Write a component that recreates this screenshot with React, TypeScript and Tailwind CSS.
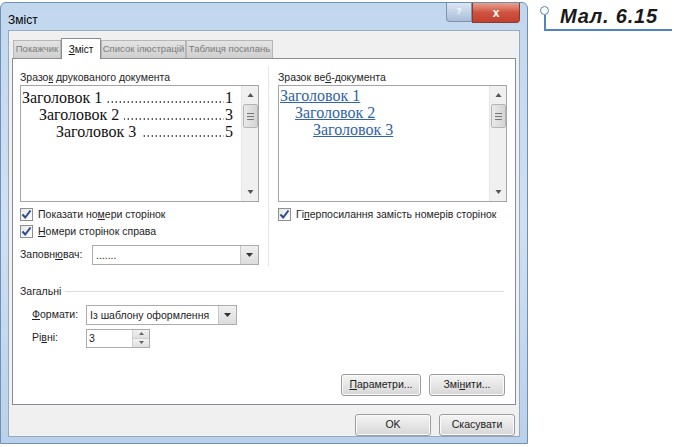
import { ReactNode } from 'react';

const ui = "font-['Liberation_Sans',Arial,sans-serif]";

function Checkbox({ checked = true }: { checked?: boolean }) {
  return (
    <span className="w-[13px] h-[13px] border border-[#8e8f8f] bg-gradient-to-br from-[#e6e6e6] to-white flex items-center justify-center shrink-0">
      {checked && (
        <svg width="11" height="11" viewBox="0 0 11 11">
          <path d="M1.5 5.5 L4.2 8.5 L9.5 1.5" fill="none" stroke="#2a4b8d" strokeWidth="2" />
        </svg>
      )}
    </span>
  );
}

function ScrollBar() {
  return (
    <div className="w-[17px] shrink-0 bg-[#f0f0f0] border-l border-[#e6e6e6] flex flex-col items-center">
      <svg width="7" height="16" viewBox="0 0 7 16" className="mt-[1px]">
        <path d="M0.5 10 L3.5 6 L6.5 10 Z" fill="#555" />
      </svg>
      <div className="w-[15px] h-[24px] mt-[1px] bg-gradient-to-r from-[#e9e9e9] to-[#d4d4d4] border border-[#b5b5b5] rounded-[2px] flex flex-col items-center justify-center gap-[2px]">
        <span className="w-[7px] h-px bg-[#777]" />
        <span className="w-[7px] h-px bg-[#777]" />
        <span className="w-[7px] h-px bg-[#777]" />
      </div>
      <div className="flex-1" />
      <svg width="7" height="16" viewBox="0 0 7 16" className="mb-[1px]">
        <path d="M0.5 6 L3.5 10 L6.5 6 Z" fill="#555" />
      </svg>
    </div>
  );
}

// one entry of the printed-style TOC; the dot leader is a repeating background
function TocLine({ title, page, indent }: { title: string; page: string; indent: number }) {
  return (
    <div className="flex items-baseline leading-[17px] whitespace-nowrap min-w-0" style={{ paddingLeft: indent }}>
      <span className="shrink-0">{title}</span>
      <span className="flex-1 min-w-0 h-[2px] ml-[5px] mr-[1px] bg-[linear-gradient(to_right,#222_1.5px,transparent_1.5px)] bg-[length:4px_100%] bg-repeat-x bg-right" />
      <span className="shrink-0">{page}</span>
    </div>
  );
}

function Combo({ value, width }: { value: string; width: number }) {
  return (
    <div className="h-[20px] border border-[#acacac] bg-white flex" style={{ width }}>
      <span className="flex-1 pl-[3px] leading-[18px] text-[#222] whitespace-nowrap overflow-hidden">{value}</span>
      <span className="w-[18px] bg-gradient-to-b from-[#f0f0f0] to-[#dcdcdc] border-l border-[#c8c8c8] flex items-center justify-center">
        <svg width="7" height="4" viewBox="0 0 7 4"><path d="M0 0 L7 0 L3.5 4 Z" fill="#333" /></svg>
      </span>
    </div>
  );
}

function Btn({ children, width }: { children: ReactNode; width: number }) {
  return (
    <div
      className="h-[22px] border border-[#9c9c9c] rounded-[3px] bg-gradient-to-b from-[#f4f4f4] via-[#e6e6e6] to-[#d6d6d6] flex items-center justify-center text-[#222] shadow-[inset_0_0_0_1px_#fbfbfb]"
      style={{ width }}
    >
      {children}
    </div>
  );
}

function Tab({ label, active = false, width }: { label: ReactNode; active?: boolean; width: number }) {
  return (
    <div
      className={
        active
          ? 'h-[21px] -mb-px border border-b-0 border-[#898c95] bg-white flex items-center justify-center text-[#111] z-10 whitespace-nowrap text-[10px]'
          : 'h-[18px] border border-b-0 border-[#b6b6b6] bg-gradient-to-b from-[#e4e4e4] to-[#cfcfcf] flex items-center justify-center text-[#7a7a7a] whitespace-nowrap text-[9.5px]'
      }
      style={{ width }}
    >
      {label}
    </div>
  );
}

export default function App() {
  return (
    <div className={`w-[674px] h-[447px] bg-white flex ${ui} text-[10.5px] text-[#1e1e1e]`}>
      {/* dialog window */}
      <div className="mt-[2px] w-[528px] h-[442px] shrink-0 rounded-t-[6px] border border-[#6f8fb4] bg-gradient-to-b from-[#c2d7ee] via-[#cfe0f2] to-[#b9d1ea] flex flex-col px-[7px] pb-[6px]">
        <div className="h-[27px] flex items-start">
          <span className="mt-[8px] text-[12px] text-black">Зміст</span>
          <div className="flex-1" />
          <div className="w-[26px] h-[19px] rounded-bl-[4px] border border-[#7c93ad] border-t-0 bg-gradient-to-b from-[#dce7f3] to-[#a9bfd8] flex items-center justify-center">
            <span className="text-[9px] font-bold text-[#f5f8fb]">?</span>
          </div>
          <div className="w-[48px] h-[20px] rounded-br-[4px] border border-[#8a3a30] border-t-0 bg-gradient-to-b from-[#e7a08e] via-[#cf5240] to-[#c3402e] flex items-center justify-center">
            <span className="text-[12px] font-bold text-white">x</span>
          </div>
        </div>

        {/* client area */}
        <div className="flex-1 bg-[#f0f0f0] border border-[#96a9c0] flex flex-col px-[3px] pt-[6px]">
          <div className="flex items-end pl-[1px] h-[21px]">
            <Tab label="Покажчик" width={48} />
            <Tab label={<span><u>З</u>міст</span>} active width={40} />
            <Tab label="Список ілюстрацій" width={85} />
            <Tab label="Таблиця посилань" width={87} />
          </div>

          {/* tab page */}
          <div className="h-[347px] bg-white border border-[#898c95] flex flex-col pl-[7px] pr-[11px]">
            <div className="flex mt-[11px]">
              {/* printed preview */}
              <div className="w-[239px] shrink-0 flex flex-col">
                <span className="h-[15px]">Зразо<u>к</u> друкованого документа</span>
                <div className="h-[117px] border border-[#a5a5a5] flex">
                  <div className="flex-1 min-w-0 pl-[1px] pr-[8px] pt-[3px] font-['Liberation_Serif','Times_New_Roman',serif] text-[16px] text-[#111]">
                    <TocLine title="Заголовок 1" page="1" indent={0} />
                    <TocLine title="Заголовок 2" page="3" indent={17} />
                    <TocLine title="Заголовок 3" page="5" indent={34} />
                  </div>
                  <ScrollBar />
                </div>
                <div className="mt-[5px] flex items-center gap-[5px] h-[15px]">
                  <Checkbox />
                  <span>Показати но<u>м</u>ери сторінок</span>
                </div>
                <div className="mt-[2px] flex items-center gap-[5px] h-[15px]">
                  <Checkbox />
                  <span><u>Н</u>омери сторінок справа</span>
                </div>
                <div className="mt-[6px] flex items-center">
                  <span className="w-[72px]">Заповн<u>ю</u>вач:</span>
                  <Combo value="......." width={167} />
                </div>
              </div>

              <div className="w-px h-[200px] -mt-[4px] bg-[#e4e4e4] ml-[9px] mr-[9px] shrink-0" />

              {/* web preview */}
              <div className="w-[229px] shrink-0 flex flex-col">
                <span className="h-[15px]">Зразок ве<u>б</u>-документа</span>
                <div className="h-[117px] border border-[#a5a5a5] flex">
                  <div className="flex-1 min-w-0 pl-[1px] pt-[1px] font-['Liberation_Serif','Times_New_Roman',serif] text-[16px] text-[#2f64a6] leading-[17px] flex flex-col items-start">
                    <span className="underline">Заголовок 1</span>
                    <span className="underline ml-[15px]">Заголовок 2</span>
                    <span className="underline ml-[33px]">Заголовок 3</span>
                  </div>
                  <ScrollBar />
                </div>
                <div className="mt-[5px] flex items-center gap-[5px] h-[15px] whitespace-nowrap">
                  <Checkbox />
                  <span>Гі<u>п</u>ерпосилання замість номерів сторінок</span>
                </div>
              </div>
            </div>

            {/* general group */}
            <div className="mt-[18px] flex items-center gap-[4px]">
              <span>Загальні</span>
              <div className="flex-1 h-px bg-[#dcdcdc]" />
            </div>
            <div className="mt-[5px] pl-[12px] flex items-center">
              <span className="w-[54px]"><u>Ф</u>ормати:</span>
              <Combo value="Із шаблону оформлення" width={151} />
            </div>
            <div className="mt-[4px] pl-[12px] flex items-center">
              <span className="w-[54px]">Рі<u>в</u>ні:</span>
              <div className="w-[64px] h-[19px] border border-[#acacac] bg-white flex">
                <span className="flex-1 pl-[2px] leading-[17px] text-[#222]">3</span>
                <span className="w-[17px] border-l border-[#d0d0d0] flex flex-col">
                  <span className="flex-1 bg-gradient-to-b from-[#f2f2f2] to-[#e0e0e0] border-b border-[#d0d0d0] flex items-center justify-center">
                    <svg width="5" height="3" viewBox="0 0 5 3"><path d="M0 3 L2.5 0 L5 3 Z" fill="#666" /></svg>
                  </span>
                  <span className="flex-1 bg-gradient-to-b from-[#f2f2f2] to-[#e0e0e0] flex items-center justify-center">
                    <svg width="5" height="3" viewBox="0 0 5 3"><path d="M0 0 L2.5 3 L5 0 Z" fill="#666" /></svg>
                  </span>
                </span>
              </div>
            </div>

            <div className="flex-1" />
            <div className="flex justify-end gap-[8px] mb-[8px] -mr-[1px]">
              <Btn width={80}><u>П</u>араметри...</Btn>
              <Btn width={76}>Змі<u>н</u>ити...</Btn>
            </div>
          </div>

          <div className="flex justify-end gap-[8px] mt-[9px] pr-[1px]">
            <Btn width={76}>OK</Btn>
            <Btn width={76}>Скасувати</Btn>
          </div>
        </div>
      </div>

      {/* figure caption */}
      <div className="flex-1 relative">
        <div className="absolute left-[12px] top-[6px] w-[9px] h-[9px] rounded-full border-[1.5px] border-[#4f86bf] bg-white" />
        <div className="absolute left-[16px] top-[15px] w-[1.5px] h-[15px] bg-[#4f86bf]" />
        <div className="absolute left-[16px] top-[29px] right-[2px] h-[1.5px] bg-[#4f86bf]" />
        <div className="pl-[32px] pt-[1px] text-[20px] font-bold italic tracking-[0.8px] text-[#1a1a1a]">Мал. 6.15</div>
      </div>
    </div>
  );
}
